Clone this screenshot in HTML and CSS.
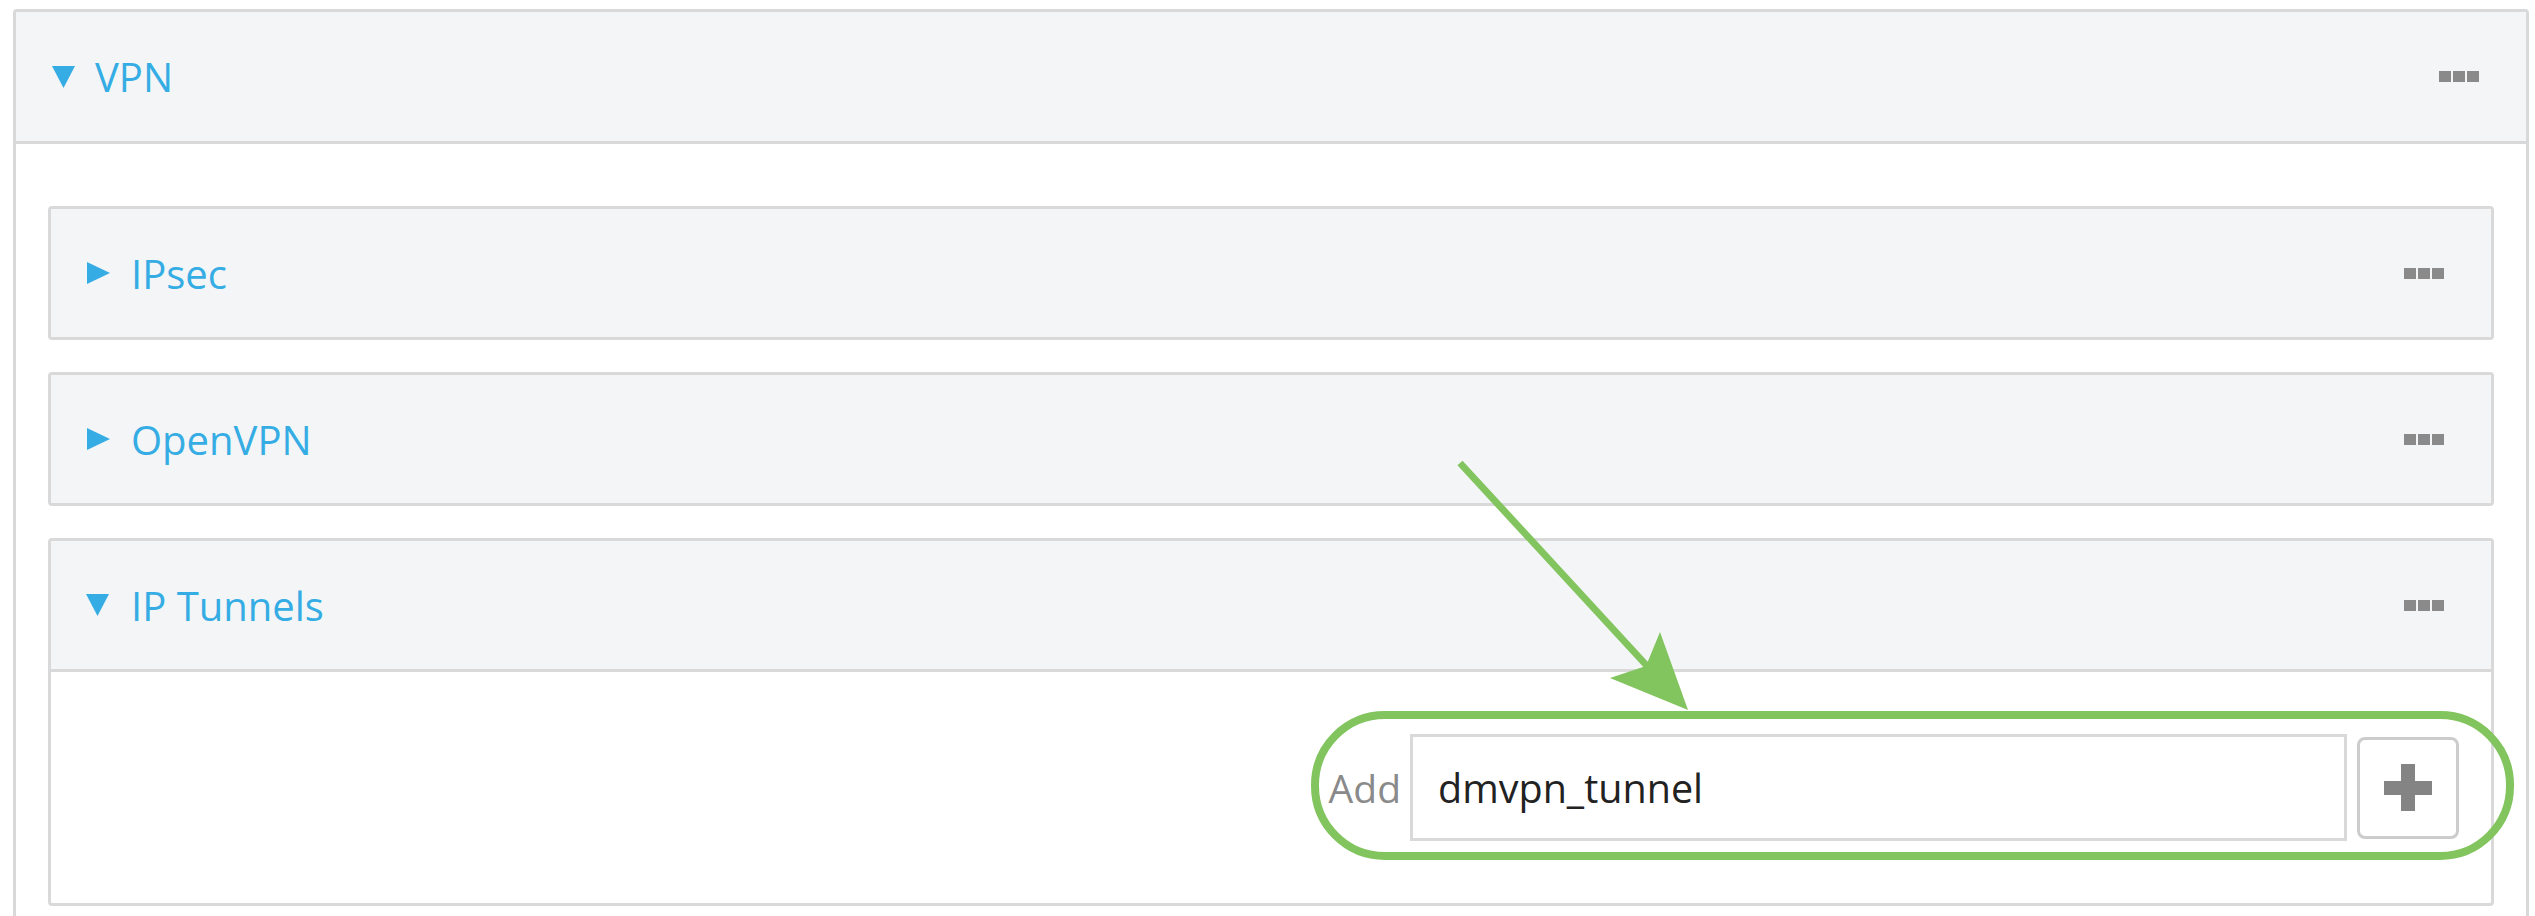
FILE: index.html
```html
<!DOCTYPE html>
<html lang="en">
<head>
  <meta charset="UTF-8" />
  <title>VPN</title>
  <link rel="stylesheet" href="styles.css">
</head>
<body>

  <div class="panel outer">
    <div class="panel-head">
      <svg class="caret" viewBox="0 0 25 22"><polygon points="1,0 24,0 12.5,22" /></svg>
      <span class="panel-title">VPN</span>
      <span class="more"><i></i><i></i><i></i></span>
    </div>
    <div class="panel-body">

      <div class="panel sub">
        <div class="panel-head">
          <svg class="caret" viewBox="0 0 25 22"><polygon points="2,0 25,11 2,22" /></svg>
          <span class="panel-title">IPsec</span>
          <span class="more"><i></i><i></i><i></i></span>
        </div>
      </div>

      <div class="panel sub">
        <div class="panel-head">
          <svg class="caret" viewBox="0 0 25 22"><polygon points="2,0 25,11 2,22" /></svg>
          <span class="panel-title">OpenVPN</span>
          <span class="more"><i></i><i></i><i></i></span>
        </div>
      </div>

      <div class="panel sub">
        <div class="panel-head">
          <svg class="caret" viewBox="0 0 25 22"><polygon points="1,0 24,0 12.5,22" /></svg>
          <span class="panel-title">IP Tunnels</span>
          <span class="more"><i></i><i></i><i></i></span>
        </div>
        <div class="panel-body tunnels">
          <div class="add-row">
            <label class="add-label" for="name">Add</label>
            <input id="name" class="add-input" type="text" value="dmvpn_tunnel">
            <button class="add-btn" type="button">
              <svg viewBox="0 0 48 47"><path d="M17 0h14v17h17v14H31v16H17V31H0V17h17z" /></svg>
            </button>
            <span class="highlight"></span>
          </div>
        </div>
      </div>

    </div>
  </div>

  <!-- callout arrow pointing at the add field -->
  <svg class="arrow" viewBox="0 0 260 270">
    <line x1="20" y1="13" x2="208" y2="217" />
    <polygon points="248,260 220,182 206,216 170,228" />
  </svg>

</body>
</html>
```

FILE: styles.css
```css
body {
  margin: 0;
  padding: 9px 6px 0 13px;
  background: #fff;
  font-family: "Open Sans", sans-serif;
  overflow: hidden;
}

.panel {
  border: 3px solid #d9d9d9;
  border-radius: 4px;
  background: #fff;
}

.panel-head {
  display: flex;
  align-items: center;
  height: 129px;
  padding: 0 47px 0 35px;
  background: #f4f5f7;
}

.outer > .panel-head {
  border-bottom: 3px solid #d9d9d9;
}

.caret {
  width: 25px;
  height: 22px;
  margin-right: 19px;
  fill: #35ade4;
}

.panel-title {
  flex: 1;
  font-size: 40px;
  font-weight: 500;
  color: #35ade4;
}

.more {
  display: flex;
  gap: 2px;
}

.more i {
  width: 12px;
  height: 11px;
  background: #8a8a8a;
}

.outer > .panel-body {
  display: flex;
  flex-direction: column;
  gap: 32px;
  padding: 62px 32px 32px;
}

.sub > .panel-head {
  height: 128px;
  padding-left: 34px;
}

.sub .caret {
  margin-right: 21px;
}

.sub > .panel-body {
  border-top: 3px solid #d9d9d9;
}

.tunnels {
  padding: 62px 32px;
}

.add-row {
  position: relative;
  display: flex;
  justify-content: flex-end;
  align-items: center;
  height: 107px;
}

.add-label {
  margin-right: 9px;
  font-size: 39px;
  color: #8a8a8a;
}

.add-input {
  box-sizing: border-box;
  width: 937px;
  height: 107px;
  padding: 0 0 0 25px;
  border: 3px solid #d9d9d9;
  border-radius: 0;
  font-family: "Open Sans", sans-serif;
  font-size: 39.5px;
  color: #222;
  outline: none;
}

.add-btn {
  box-sizing: border-box;
  display: flex;
  align-items: center;
  justify-content: center;
  width: 102px;
  height: 102px;
  margin-left: 10px;
  padding: 0;
  border: 3px solid #cccccc;
  border-radius: 8px;
  background: #fff;
}

.add-btn svg {
  width: 48px;
  height: 47px;
  fill: #848484;
}

.highlight {
  position: absolute;
  top: -23px;
  bottom: -19px;
  right: -55px;
  width: 1203px;
  box-sizing: border-box;
  border: 8px solid #82c45e;
  border-radius: 74px;
  pointer-events: none;
}

.arrow {
  position: absolute;
  left: 1440px;
  top: 450px;
  width: 260px;
  height: 270px;
}

.arrow line {
  stroke: #82c45e;
  stroke-width: 7;
}

.arrow polygon {
  fill: #82c45e;
}
```
